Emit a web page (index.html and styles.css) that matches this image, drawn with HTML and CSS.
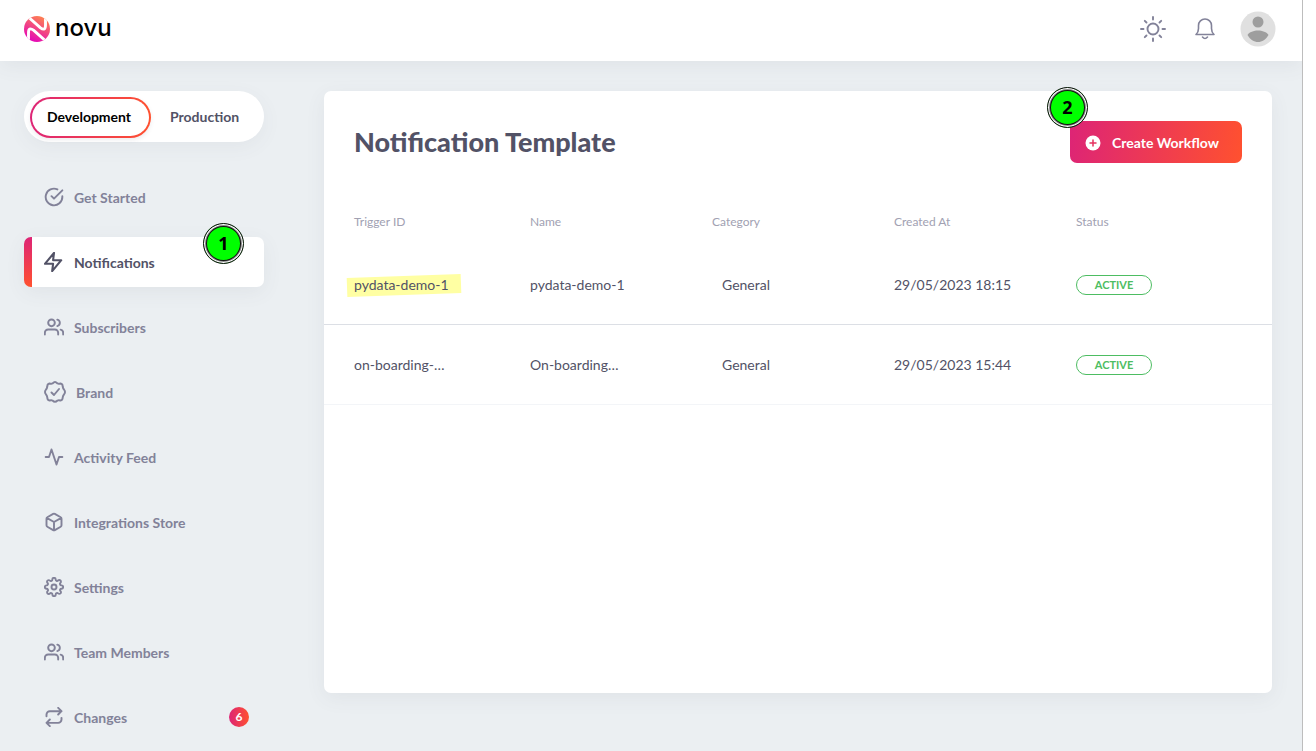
FILE: index.html
```html
<!DOCTYPE html>
<html lang="en">
<head>
<meta charset="utf-8">
<title>Notification Template</title>
<link rel="stylesheet" href="styles.css">
</head>
<body>
<svg class="defs" aria-hidden="true">
  <symbol id="users" viewBox="0 0 24 24"><path d="M17 21v-2a4 4 0 0 0-4-4H5a4 4 0 0 0-4 4v2M23 21v-2a4 4 0 0 0-3-3.87M16 3.13a4 4 0 0 1 0 7.75"/><circle cx="9" cy="7" r="4"/></symbol>
</svg>
<div class="app">
  <header class="topbar">
    <a class="logo" href="#">
      <svg class="logo-mark" viewBox="0 0 26 26" aria-hidden="true">
        <defs>
          <linearGradient id="lg" x1="0.25" y1="1" x2="0.75" y2="0"><stop offset="0" stop-color="#e300bd"/><stop offset="1" stop-color="#ff884d"/></linearGradient>
          <clipPath id="lc"><circle cx="13" cy="13" r="13"/></clipPath>
        </defs>
        <circle cx="13" cy="13" r="13" fill="url(#lg)"/>
        <g clip-path="url(#lc)" fill="none" stroke="#fff" stroke-width="2.900"><path d="M2 -1L16.500 11.800Q21.500 15.500 21.500 9V-1"/><path d="M24 27L9.500 14.200Q4.500 10.500 4.500 17V27"/></g>
      </svg>
      <span class="logo-name">novu</span>
    </a>
    <div class="tools">
      <button class="tool" aria-label="Theme"><svg class="sun" viewBox="0 0 26 26"><circle cx="13" cy="13" r="5.500"/><path d="M13 1v2.500M13 22.500V25M1 13h2.500M22.500 13H25M4.800 4.800l1.700 1.700M19.500 19.500l1.700 1.700M4.800 21.200l1.700-1.700M19.500 6.500l1.700-1.700"/></svg></button>
      <button class="tool" aria-label="Alerts"><svg class="bell" viewBox="0 0 20 22"><path d="M1 16.500h18c-1.500-1.300-2.500-3-2.500-6V7.500a6.500 6.500 0 0 0-13 0v3c0 3-1 4.700-2.500 6zM7.500 19q2.500 3 5 0"/></svg></button>
      <button class="tool" aria-label="Account"><svg class="avatar" viewBox="0 0 36 36"><circle cx="18" cy="18" r="17.500" fill="#e0e0e0"/><circle cx="18" cy="11" r="5.500" fill="#9e9e9e"/><path d="M7.500 24C9 21 14 19.500 18 19.500S27 21 28.500 24C26 28.500 22 31 18 31S10 28.500 7.500 24z" fill="#9e9e9e"/></svg></button>
    </div>
  </header>
  <div class="body">
    <aside class="sidebar">
      <div class="env">
        <button class="env-item selected">Development</button>
        <button class="env-item">Production</button>
      </div>
      <nav class="nav">
        <a class="link" href="#"><svg viewBox="0 0 24 24"><path d="M22 11.080V12a10 10 0 1 1-5.930-9.140M22 4L12 14.010l-3-3"/></svg>Get Started</a>
        <a class="link current" href="#"><svg viewBox="2 1 22 22"><path d="M13 2L3 14h9l-1 8 10-12h-9l1-8z"/></svg>Notifications<span class="marker marker-one">1</span></a>
        <a class="link" href="#"><svg><use href="#users"/></svg>Subscribers</a>
        <a class="link" href="#"><svg class="wide" viewBox="0 0 22 22"><path d="M11 1Q12 1 13.500 2.500Q14.500 3 16.500 2.500Q18.700 2.800 18.700 5.500Q19 7.500 20 8.500Q22 11 20 13.500Q19 14.500 18.700 16.500Q18.700 19.200 16.500 19.500Q14.500 19 13.500 19.500Q11 22 8.500 19.500Q7.500 19 5.500 19.500Q3.300 19.200 3.300 16.500Q3 14.500 2 13.500Q0 11 2 8.500Q3 7.500 3.300 5.500Q3.300 2.800 5.500 2.500Q7.500 3 8.500 2.500Q10 1 11 1zM7.500 11.500l2.500 2.500 5-6"/></svg>Brand</a>
        <a class="link" href="#"><svg viewBox="0 0 24 24"><path d="M22 12h-4l-3 9L9 3l-3 9H2"/></svg>Activity Feed</a>
        <a class="link" href="#"><svg viewBox="0 0 24 24"><path d="M21 16V8a2 2 0 0 0-1-1.730l-7-4a2 2 0 0 0-2 0l-7 4A2 2 0 0 0 3 8v8a2 2 0 0 0 1 1.730l7 4a2 2 0 0 0 2 0l7-4A2 2 0 0 0 21 16zM3.270 6.960L12 12.010l8.730-5.050M12 22.080V12"/></svg>Integrations Store</a>
        <a class="link" href="#"><svg viewBox="0 0 24 24"><circle cx="12" cy="12" r="3"/><path d="M19.400 15a1.650 1.650 0 0 0 .33 1.820l.06.06a2 2 0 0 1 0 2.830 2 2 0 0 1-2.830 0l-.06-.06a1.650 1.650 0 0 0-1.820-.33 1.650 1.650 0 0 0-1 1.510V21a2 2 0 0 1-2 2 2 2 0 0 1-2-2v-.09A1.650 1.650 0 0 0 9 19.400a1.650 1.650 0 0 0-1.820.33l-.06.06a2 2 0 0 1-2.830 0 2 2 0 0 1 0-2.830l.06-.06a1.650 1.650 0 0 0 .33-1.820 1.650 1.650 0 0 0-1.510-1H3a2 2 0 0 1-2-2 2 2 0 0 1 2-2h.09A1.650 1.650 0 0 0 4.600 9a1.650 1.650 0 0 0-.33-1.820l-.06-.06a2 2 0 0 1 0-2.830 2 2 0 0 1 2.830 0l.06.06a1.650 1.650 0 0 0 1.820.33H9a1.650 1.650 0 0 0 1-1.510V3a2 2 0 0 1 2-2 2 2 0 0 1 2 2v.09a1.650 1.650 0 0 0 1 1.510 1.650 1.650 0 0 0 1.820-.33l.06-.06a2 2 0 0 1 2.830 0 2 2 0 0 1 0 2.830l-.06.06a1.650 1.650 0 0 0-.33 1.820V9a1.650 1.650 0 0 0 1.510 1H21a2 2 0 0 1 2 2 2 2 0 0 1-2 2h-.09a1.650 1.650 0 0 0-1.510 1z"/></svg>Settings</a>
        <a class="link" href="#"><svg><use href="#users"/></svg>Team Members</a>
        <a class="link" href="#"><svg viewBox="0 0 24 24"><path d="M17 1l4 4-4 4M3 11V9a4 4 0 0 1 4-4h14M7 23l-4-4 4-4M21 13v2a4 4 0 0 1-4 4H3"/></svg>Changes<span class="count">6</span></a>
      </nav>
    </aside>
    <main class="panel">
      <div class="panel-head">
        <h1>Notification Template</h1>
        <button class="create"><svg viewBox="0 0 16 16" aria-hidden="true"><circle cx="8" cy="8" r="7.500" fill="#fff"/><path d="M8 5v6M5 8h6" stroke="#e5315f" stroke-width="1.500" stroke-linecap="round"/></svg>Create Workflow<span class="marker marker-two">2</span></button>
      </div>
      <table>
        <colgroup><col class="c-id"><col class="c-mid"><col class="c-mid"><col class="c-mid"><col></colgroup>
        <thead><tr><th>Trigger ID</th><th>Name</th><th>Category</th><th>Created At</th><th>Status</th></tr></thead>
        <tbody>
          <tr><td><span class="marked">pydata-demo-1</span></td><td>pydata-demo-1</td><td class="category">General</td><td>29/05/2023 18:15</td><td><span class="status">ACTIVE</span></td></tr>
          <tr><td>on-boarding-…</td><td>On-boarding…</td><td class="category">General</td><td>29/05/2023 15:44</td><td><span class="status">ACTIVE</span></td></tr>
        </tbody>
      </table>
    </main>
  </div>
</div>
</body>
</html>
```
FILE: styles.css
```css
* { box-sizing: border-box; }
body { margin: 0; background: #fff; font-family: Lato, sans-serif; font-size: 14px; line-height: 20px; color: #525266; }
button { font: inherit; color: inherit; border: 0; background: none; padding: 0; }
a { color: inherit; text-decoration: none; }
.defs { position: absolute; width: 0; height: 0; }
.app { min-height: 100vh; margin-right: 13px; border-right: 1px solid #bdbdbd; background: #ebeff2; display: flex; flex-direction: column; overflow: hidden; }
.topbar { height: 61px; padding: 0 26px 4px 24px; background: #fff; box-shadow: 0 5px 20px rgba(82, 82, 102, .07); display: flex; align-items: center; justify-content: space-between; }
.logo { display: flex; align-items: center; gap: 5px; color: #000; font-family: Inter, sans-serif; font-size: 24px; font-weight: 500; line-height: 26px; }
.logo-mark { width: 26px; height: 26px; }
.logo-name { padding-bottom: 2px; }
.tools { display: flex; align-items: center; gap: 27px; color: #828299; }
.tool { display: flex; }
.tool:last-child { margin-left: -4px; }
.tool svg { display: block; }
.sun, .bell { fill: none; stroke: currentColor; stroke-width: 1.600; stroke-linecap: round; stroke-linejoin: round; }
.sun { width: 26px; height: 26px; stroke-width: 1.900; }
.bell { width: 24px; height: 22px; }
.avatar { width: 36px; height: 36px; }
.body { flex: 1; display: flex; gap: 60px; padding: 30px 30px 0 24px; }
.sidebar { flex: 0 0 240px; }
.env { display: flex; height: 51px; padding: 6px 6px 4px; border-radius: 26px; background: #fff; box-shadow: 0 5px 20px rgba(82, 82, 102, .06); }
.env-item { flex: 1 0 auto; padding-bottom: 1px; font-weight: 700; }
.env-item.selected { flex: 0 0 121px; padding-right: 3px; color: #000; border: 2px solid transparent; border-radius: 21px; background: linear-gradient(#fff, #fff) padding-box, linear-gradient(90deg, #dd2476, #ff512f) border-box; box-shadow: 0 2px 4px rgba(82, 82, 102, .1); }
.nav { display: flex; flex-direction: column; gap: 15px; margin-top: 30px; }
.link { position: relative; height: 50px; padding: 2px 15px 0 20px; display: flex; align-items: center; gap: 10px; color: #828299; font-weight: 700; border-radius: 7px; }
.link svg { width: 20px; height: 20px; margin-bottom: 3px; fill: none; stroke: currentColor; stroke-width: 2.300; stroke-linecap: round; stroke-linejoin: round; }
.link svg.wide { width: 22px; height: 22px; stroke-width: 1.900; }
.link.current { color: #525266; background: linear-gradient(#dd2476, #ff512f) left / 8px 100% no-repeat #fff; box-shadow: 0 5px 20px rgba(82, 82, 102, .07); }
.count { margin-left: auto; margin-bottom: 3px; width: 20px; height: 20px; border-radius: 50%; color: #fff; background: linear-gradient(90deg, #dd2476, #ff512f); font-size: 12px; text-align: center; }
.marker { position: absolute; width: 41px; height: 41px; border: 1px solid #111; border-radius: 50%; background: #0f0; box-shadow: inset 0 0 0 1px #fff, inset 0 0 0 2px #888, inset 0 0 0 3px #111; color: #000; font: 700 18px/39px "Noto Sans", sans-serif; text-align: center; }
.marker-one { right: 20px; top: -14px; }
.marker-two { left: -23px; top: -34px; }
.panel { flex: 1; min-width: 0; margin-bottom: 58px; border-radius: 7px; background: #fff; box-shadow: 0 5px 20px rgba(82, 82, 102, .07); }
.panel-head { display: flex; align-items: center; justify-content: space-between; padding: 30px 30px 0; }
h1 { margin: 0; font-size: 27px; line-height: 42px; font-weight: 900; }
.create { position: relative; height: 42px; padding: 1px 23px 0 15px; display: flex; align-items: center; gap: 11px; border-radius: 7px; color: #fff; background: linear-gradient(99deg, #dd2476, #ff512f); font-weight: 700; }
.create svg { width: 16px; height: 16px; }
table { width: 100%; margin-top: 39px; border-collapse: collapse; table-layout: fixed; text-align: left; }
.c-id { width: 206px; }
.c-mid { width: 182px; }
th { height: 42px; padding: 0 0 2px; font-size: 12px; font-weight: 400; color: #a1a1b2; }
td { height: 80px; padding: 2px 0 0; border-bottom: 1px solid #f3f5f8; }
tbody tr:first-child td { border-bottom-color: #dcdfe5; }
th:first-child, td:first-child { padding-left: 30px; }
td.category { padding-left: 10px; }
.marked { position: relative; z-index: 0; }
.marked::before { content: ""; position: absolute; z-index: -1; inset: 0 -12px -2px -7px; background: #ffffa3; transform: rotate(-2deg); }
.status { display: block; width: 76px; height: 20px; border: 1px solid #4dbd62; border-radius: 10px; color: #4dbd62; font-size: 11px; line-height: 18px; font-weight: 700; text-align: center; }
```
